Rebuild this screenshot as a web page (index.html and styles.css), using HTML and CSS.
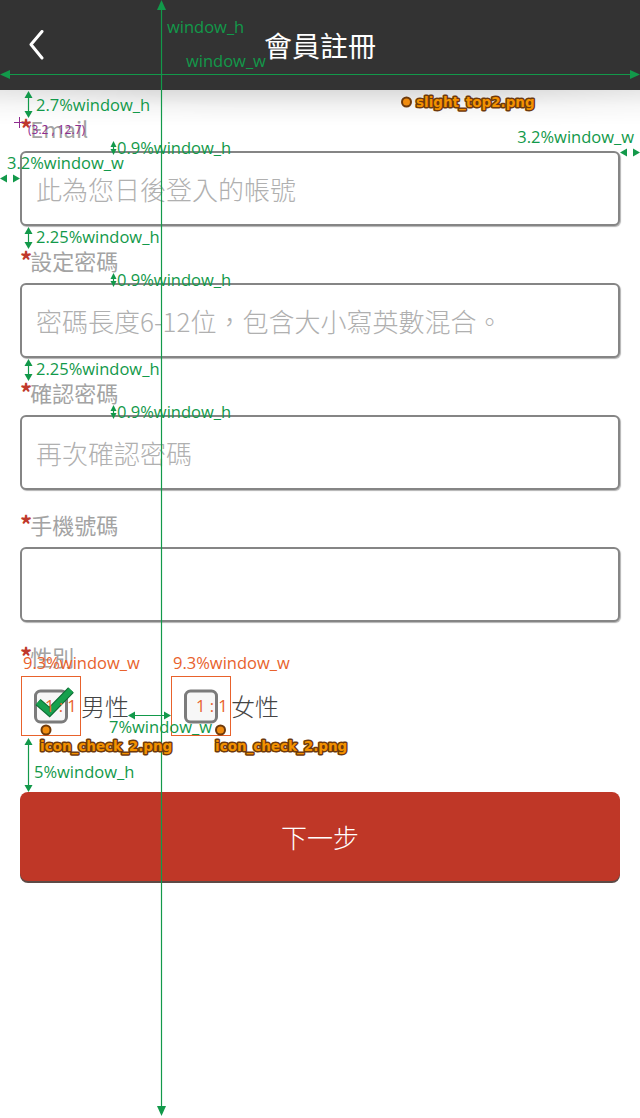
FILE: index.html
```html
<!DOCTYPE html>
<html lang="zh-Hant">
<head>
<meta charset="utf-8">
<title>會員註冊</title>
<link rel="stylesheet" href="styles.css">
</head>
<body>
<div class="page">
  <header class="topbar">
    <div class="back-wrap">
      <svg class="back" width="16" height="30" viewBox="0 0 16 30"><polyline points="13,1.5 2,14.5 13,28"/></svg>
    </div>
    <h1 class="title">會員註冊</h1>
    <div></div>
  </header>
  <div class="shade"></div>

  <main class="form">
    <div class="field">
      <label class="label"><span class="req">*</span>Email</label>
      <div class="input"><span class="ph">此為您日後登入的帳號</span></div>
    </div>
    <div class="field">
      <label class="label"><span class="req">*</span>設定密碼</label>
      <div class="input"><span class="ph">密碼長度6-12位，包含大小寫英數混合。</span></div>
    </div>
    <div class="field">
      <label class="label"><span class="req">*</span>確認密碼</label>
      <div class="input"><span class="ph">再次確認密碼</span></div>
    </div>
    <div class="field">
      <label class="label"><span class="req">*</span>手機號碼</label>
      <div class="input"></div>
    </div>
    <div class="field gender">
      <label class="label"><span class="req">*</span>性別</label>
      <div class="choices">
        <div class="choice">
          <svg class="box" width="60" height="60" viewBox="0 0 60 60">
            <rect class="box-frame" x="14.5" y="15" width="31" height="31" rx="5"/>
            <polyline class="tick-edge" points="17,26 28.5,36 50,14"/>
            <polyline class="tick" points="17,26 28.5,36 50,14"/>
          </svg>
          <span class="choice-text">男性</span>
        </div>
        <div class="choice">
          <svg class="box" width="60" height="60" viewBox="0 0 60 60">
            <rect class="box-frame" x="14.5" y="15" width="31" height="31" rx="5"/>
          </svg>
          <span class="choice-text">女性</span>
        </div>
      </div>
    </div>
    <button class="next" type="button">下一步</button>
  </main>

  <svg class="notes" width="640" height="1118" viewBox="0 0 640 1118">
    <!-- window lines -->
    <line class="gl" x1="161.5" y1="6" x2="161.5" y2="1110"/>
    <polygon class="gf" points="161.5,0 157,10 166,10"/>
    <polygon class="gf" points="161.5,1116 157,1106 166,1106"/>
    <line class="gl" x1="6" y1="74.5" x2="634" y2="74.5"/>
    <polygon class="gf" points="0,74.5 10,70 10,79"/>
    <polygon class="gf" points="640,74.5 630,70 630,79"/>
    <text class="gt" x="167" y="33">window_h</text>
    <text class="gt" x="186" y="67">window_w</text>

    <!-- 2.7% -->
    <line class="gl" x1="28.5" y1="97" x2="28.5" y2="112"/>
    <polygon class="gf" points="28.5,91 24.5,98 32.5,98"/>
    <polygon class="gf" points="28.5,118 24.5,111 32.5,111"/>
    <text class="gt" x="36" y="111">2.7%window_h</text>

    <!-- marker -->
    <line class="pl" x1="14" y1="122.5" x2="24" y2="122.5"/>
    <line class="pl" x1="19.5" y1="117" x2="19.5" y2="128"/>
    <text class="pt" x="28" y="134">(3.2 , 12.7)</text>

    <!-- 0.9% #1 -->
    <line class="gl" x1="113.5" y1="144" x2="113.5" y2="152"/>
    <polygon class="gf" points="113.5,141 110.5,147 116.5,147"/>
    <polygon class="gf" points="113.5,155 110.5,149 116.5,149"/>
    <text class="gt" x="117" y="154">0.9%window_h</text>

    <!-- right 3.2% -->
    <text class="gt" x="634" y="143" text-anchor="end">3.2%window_w</text>
    <polygon class="gf" points="620,152.5 627,148.5 627,156.5"/>
    <polygon class="gf" points="640,152.5 633,148.5 633,156.5"/>

    <!-- left 3.2% -->
    <text class="gt" x="7" y="169">3.2%window_w</text>
    <polygon class="gf" points="0,178.5 7,174.5 7,182.5"/>
    <polygon class="gf" points="20,178.5 13,174.5 13,182.5"/>

    <!-- 2.25% #1 -->
    <line class="gl" x1="28.5" y1="232" x2="28.5" y2="244"/>
    <polygon class="gf" points="28.5,227 24.5,234 32.5,234"/>
    <polygon class="gf" points="28.5,249 24.5,242 32.5,242"/>
    <text class="gt" x="36" y="243">2.25%window_h</text>

    <!-- 0.9% #2 -->
    <line class="gl" x1="113.5" y1="276" x2="113.5" y2="284"/>
    <polygon class="gf" points="113.5,273 110.5,279 116.5,279"/>
    <polygon class="gf" points="113.5,287 110.5,281 116.5,281"/>
    <text class="gt" x="117" y="286">0.9%window_h</text>

    <!-- 2.25% #2 -->
    <line class="gl" x1="28.5" y1="364" x2="28.5" y2="376"/>
    <polygon class="gf" points="28.5,359 24.5,366 32.5,366"/>
    <polygon class="gf" points="28.5,381 24.5,374 32.5,374"/>
    <text class="gt" x="36" y="375">2.25%window_h</text>

    <!-- 0.9% #3 -->
    <line class="gl" x1="113.5" y1="408" x2="113.5" y2="416"/>
    <polygon class="gf" points="113.5,405 110.5,411 116.5,411"/>
    <polygon class="gf" points="113.5,419 110.5,413 116.5,413"/>
    <text class="gt" x="117" y="418">0.9%window_h</text>

    <!-- checkbox boxes -->
    <text class="ot" x="23" y="669">9.3%window_w</text>
    <text class="ot" x="173" y="669">9.3%window_w</text>
    <rect class="ol" x="21.5" y="676.5" width="59" height="59"/>
    <rect class="ol" x="171.5" y="676.5" width="59" height="59"/>
    <text class="ot" x="45" y="712">1 : 1</text>
    <text class="ot" x="196" y="712">1 : 1</text>

    <!-- 7% -->
    <line class="gl" x1="132" y1="715.5" x2="167" y2="715.5"/>
    <polygon class="gf" points="128,715.5 135,711.5 135,719.5"/>
    <polygon class="gf" points="171,715.5 164,711.5 164,719.5"/>
    <text class="gt" x="109" y="733">7%window_w</text>

    <!-- 5% -->
    <line class="gl" x1="28.5" y1="743" x2="28.5" y2="787"/>
    <polygon class="gf" points="28.5,738 24.5,745 32.5,745"/>
    <polygon class="gf" points="28.5,792 24.5,785 32.5,785"/>
    <text class="gt" x="34" y="778">5%window_h</text>

    <!-- asset tags -->
    <circle class="dot" cx="406.5" cy="102" r="4.5"/>
    <text class="tag" x="416" y="107">slight_top2.png</text>
    <circle class="dot" cx="46" cy="730" r="4.5"/>
    <text class="tag" x="40" y="751">icon_check_2.png</text>
    <circle class="dot" cx="220.5" cy="730" r="4.5"/>
    <text class="tag" x="215" y="751">icon_check_2.png</text>
  </svg>
</div>
</body>
</html>
```

FILE: styles.css
```css
* { box-sizing: border-box; }

html, body {
  margin: 0;
  padding: 0;
  background: #ffffff;
}

body {
  font-family: "Noto Sans CJK TC", "Noto Sans", sans-serif;
  color: #444444;
}

.page {
  position: relative;
  width: 640px;
  height: 1118px;
  overflow: hidden;
  background: #ffffff;
}

/* header */
.topbar {
  height: 90px;
  background: #333333;
  display: grid;
  grid-template-columns: 1fr auto 1fr;
  align-items: center;
}

.back-wrap {
  padding-left: 29px;
  display: flex;
  align-items: center;
}

.back {
  display: block;
  fill: none;
  stroke: #ffffff;
  stroke-width: 3;
  stroke-linecap: round;
  stroke-linejoin: round;
}

.title {
  margin: 0;
  font-size: 28px;
  font-weight: normal;
  line-height: 1;
  color: #ffffff;
}

.shade {
  position: absolute;
  left: 0;
  top: 90px;
  width: 640px;
  height: 36px;
  background:
    linear-gradient(to bottom, rgba(0,0,0,0.14), rgba(0,0,0,0.05) 45%, rgba(0,0,0,0) 100%);
  -webkit-mask-image: radial-gradient(ellipse 75% 140% at 50% 0, #000 35%, rgba(0,0,0,0.35) 100%);
  mask-image: radial-gradient(ellipse 75% 140% at 50% 0, #000 35%, rgba(0,0,0,0.35) 100%);
}

/* form */
.form {
  padding: 26px 20px 0 20px;
}

.field {
  margin-bottom: 22px;
}

.label {
  display: block;
  height: 30px;
  padding-top: 1px;
  line-height: 22px;
  font-size: 22px;
  color: #a3a3a3;
  margin-bottom: 5px;
}

.req {
  color: #c0392b;
  font-size: 24px;
  font-weight: bold;
  display: inline-block;
  vertical-align: top;
  line-height: 22px;
  margin-left: 0;
  margin-right: -2px;
}

.input {
  height: 75px;
  border: 2px solid #858585;
  border-radius: 6px;
  box-shadow: 1px 1px 1px rgba(0,0,0,0.3);
  background: #ffffff;
  display: flex;
  align-items: center;
  padding-left: 14px;
}

.ph {
  font-size: 26px;
  font-weight: 300;
  color: #b0b0b0;
  white-space: nowrap;
}

.gender {
  margin-bottom: 0;
}

.gender .label {
  margin-bottom: 2px;
}

.choices {
  display: flex;
  align-items: center;
  gap: 42px;
  padding-left: 1px;
}

.choice {
  display: flex;
  align-items: center;
}

.box {
  display: block;
  width: 60px;
  height: 60px;
}

.box-frame {
  fill: #f7f7f7;
  stroke: #7b7b7b;
  stroke-width: 3;
}

.tick-edge {
  fill: none;
  stroke: #0d6b33;
  stroke-width: 8;
  stroke-linejoin: miter;
  stroke-linecap: butt;
}

.tick {
  fill: none;
  stroke: #17a04e;
  stroke-width: 6;
  stroke-linejoin: miter;
  stroke-linecap: butt;
}

.choice-text {
  font-size: 24px;
  font-weight: 300;
  color: #444444;
  line-height: 1;
}

.next {
  display: block;
  width: 600px;
  height: 89px;
  margin-top: 56px;
  border: none;
  border-radius: 8px;
  background: #bf3727;
  box-shadow: 0 2px 0 #5d4a46;
  color: #ffffff;
  font-family: "Noto Sans CJK TC", "Noto Sans", sans-serif;
  font-size: 26px;
  font-weight: 300;
  padding: 0;
}

/* annotation overlay */
.notes {
  position: absolute;
  left: 0;
  top: 0;
  pointer-events: none;
}

.gl { stroke: #12994a; stroke-width: 1.2; }
.gf { fill: #12994a; }
.gt {
  fill: #12994a;
  font-family: "Open Sans", "Noto Sans", sans-serif;
  font-size: 16.5px;
}

.pl { stroke: #8e2b8e; stroke-width: 1; }
.pt {
  fill: #8e2b8e;
  font-family: "Open Sans", "Noto Sans", sans-serif;
  font-size: 12px;
}

.ol { fill: none; stroke: #e8622c; stroke-width: 1; }
.ot {
  fill: #e8622c;
  font-family: "Open Sans", "Noto Sans", sans-serif;
  font-size: 16.5px;
}

.dot {
  fill: #f08c10;
  stroke: #6e3a0c;
  stroke-width: 2;
}

.tag {
  fill: #f39200;
  stroke: #6e3a0c;
  stroke-width: 3;
  paint-order: stroke;
  stroke-linejoin: round;
  font-family: "DejaVu Sans", sans-serif;
  font-weight: bold;
  font-size: 13.5px;
}
```
